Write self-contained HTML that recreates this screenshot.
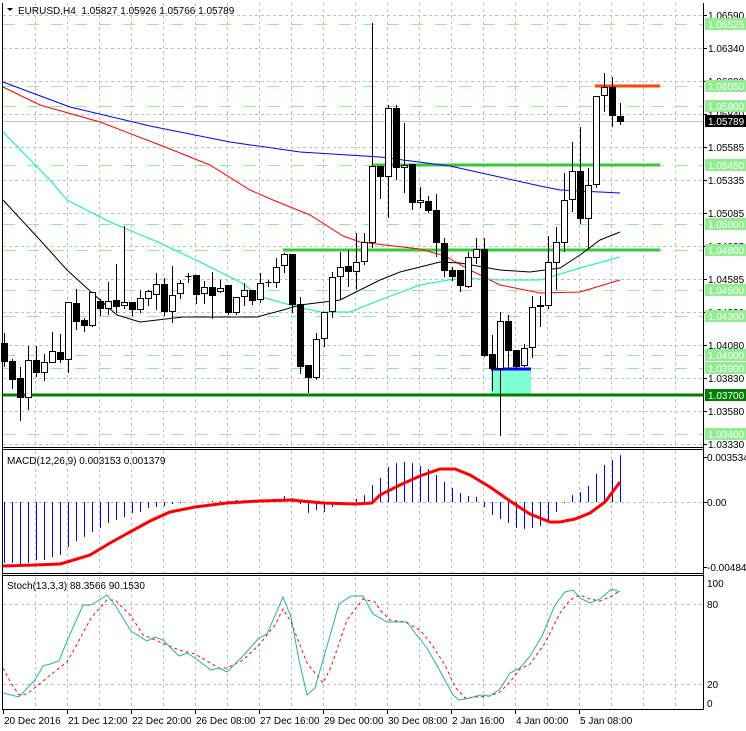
<!DOCTYPE html>
<html><head><meta charset="utf-8"><style>
html,body{margin:0;padding:0;background:#fff;}
svg{display:block;font-family:"Liberation Sans",sans-serif;font-size:10px;}
</style></head><body>
<svg id="s" width="746" height="731" xmlns="http://www.w3.org/2000/svg"></svg>
<script>
var S=document.getElementById('s'),o='';
function L(x1,y1,x2,y2,c,w,d){o+='<line x1="'+x1+'" y1="'+y1+'" x2="'+x2+'" y2="'+y2+'" stroke="'+c+'" stroke-width="'+(w||1)+'"'+(d?' stroke-dasharray="'+d+'"':'')+'/>';}
function R(x,y,w,h,f,st){o+='<rect x="'+x+'" y="'+y+'" width="'+w+'" height="'+h+'" fill="'+f+'"'+(st?' stroke="'+st+'" stroke-width="1"':'')+'/>';}
function T(x,y,t,c,a){o+='<text x="'+x+'" y="'+y+'" fill="'+(c||'#000')+'"'+(a?' text-anchor="'+a+'"':'')+'>'+t+'</text>';}
function P(pts,c,w,d){o+='<polyline fill="none" points="'+pts.map(function(p){return p.join(',')}).join(' ')+'" stroke="'+c+'" stroke-width="'+(w||1)+'"'+(d?' stroke-dasharray="'+d+'"':'')+'/>';}
var G='#c0c0c0',LG='#90ee90';
for(var x=35.5;x<700;x+=32){L(x,3,x,447,G,1,'3,3');L(x,451,x,573,G,1,'3,3');L(x,577,x,708,G,1,'3,3');}
var gl=[[15,'1.06590'],[48,'1.06340'],[81,'1.06090'],[114,'1.05840'],[147,'1.05585'],[180,'1.05335'],[213,'1.05085'],[246,'1.04835'],[279,'1.04585'],[312,'1.04330'],[345,'1.04080'],[378,'1.03830'],[411,'1.03580'],[444,'1.03330']];
gl.forEach(function(g){L(3,g[0]+.5,703,g[0]+.5,G,1,'3,3');});
var lv=[[24,'1.06525'],[86,'1.06050'],[106,'1.05900'],[165,'1.05450'],[224,'1.05000'],[250,'1.04800'],[290,'1.04500'],[316,'1.04300'],[355,'1.04000'],[368,'1.03900'],[434,'1.03400']];
lv.forEach(function(g){L(3,g[0]+.5,703,g[0]+.5,LG,1,'12,12');});
L(3,121.5,703,121.5,'#c0c0c0',1);
L(3,502.5,703,502.5,G,1,'3,3');L(3,604.5,703,604.5,G,1,'3,3');L(3,684.5,703,684.5,G,1,'3,3');
R(491,369,40,26,'#7fffd4');
L(491,369,531,369,'#0000ff',3);
L(283,250,660,250,'#32cd32',3);
L(372,165,660,165,'#32cd32',3);
L(3,395,703,395,'#008000',3);
L(595,86,660,86,'#ff4500',3);
P([[3,82],[70,107],[150,126],[230,142],[300,152],[380,157],[450,166],[540,186],[560,190],[620,193]],'#0000ff',1);
P([[3,87],[40,105],[100,122],[160,145],[210,165],[250,190],[273,200],[310,215],[343,236],[360,242],[420,249],[445,256],[470,270],[500,285],[540,293],[580,292],[620,280]],'#ff0000',1);
P([[3,132],[50,180],[67,200],[110,222],[160,243],[200,262],[240,282],[262,297],[290,305],[320,312],[350,312],[380,300],[420,285],[460,278],[500,280],[540,280],[580,268],[620,257]],'#00fa9a',1);
P([[3,200],[40,240],[67,270],[100,300],[117,315],[140,322],[183,317],[257,317],[283,310],[300,305],[340,300],[380,280],[400,272],[440,262],[460,263],[500,270],[530,272],[560,268],[580,255],[600,240],[620,232]],'#000',1);
var C=[[343,362,333,367,0],[361,380,359,389,0],[378,398,367,421,0],[360,398,346,410,1],[360,373,346,377,0],[362,373,354,381,1],[351,363,332,363,1],[352,360,334,363,0],[302,360,302,373,1],[303,322,289,330,0],[320,326,318,332,0],[292,326,292,327,1],[301,309,299,316,0],[301,309,282,315,1],[300,307,264,313,0],[302,306,226,309,1],[302,310,302,316,0],[298,310,290,313,1],[291,299,290,306,1],[284,295,273,310,1],[284,312,278,316,0],[295,312,266,323,1],[283,294,280,299,1],[276,276,273,283,0],[275,295,275,304,0],[287,294,281,304,1],[287,296,272,319,0],[288,292,280,293,1],[285,313,285,315,0],[297,313,297,315,1],[290,297,283,306,1],[290,301,290,305,0],[283,300,273,303,1],[282,282,280,287,0],[267,283,258,288,1],[254,266,253,273,1],[254,305,254,313,0],[304,367,297,374,0],[365,378,365,393,0],[339,378,333,380,1],[312,339,312,347,1],[277,312,272,318,1],[267,277,252,300,1],[266,272,250,287,0],[262,272,233,290,1],[242,262,233,265,1],[166,243,23,248,1],[166,177,166,199,0],[108,177,105,218,1],[108,168,105,180,0],[165,168,123,193,1],[164,203,164,210,0],[200,203,187,208,1],[201,211,196,213,0],[210,243,194,257,0],[243,271,238,277,0],[270,277,267,281,0],[270,286,270,292,0],[257,287,252,288,1],[249,258,238,264,1],[249,356,238,357,0],[354,369,335,391,0],[321,369,312,436,1],[321,351,315,369,0],[350,367,350,369,0],[348,366,344,367,1],[307,348,296,358,1],[305,307,296,327,1],[262,306,236,309,1],[242,263,227,290,1],[200,243,173,252,1],[171,200,142,212,1],[171,219,127,224,0],[185,219,168,250,1],[96,185,96,188,1],[87,96,73,112,1],[87,116,77,127,0],[116,122,103,125,0]];
C.forEach(function(c,i){var x=4+8*i+.5;L(x,c[2],x,c[3],'#000',1);var h=Math.max(c[1]-c[0],1);
 if(c[0]==c[1]){L(x-3,c[0]+.5,x+3,c[0]+.5,'#000',1);}
 else if(c[4])R(x-3,c[0]+.5,6,h-1,'#fff','#000');else R(x-3.5,c[0],7,h,'#000');});
var H=[563,563,567,563,560,560,557,555,547,541,537,532,528,523,520,517,513,512,508,507,506,504,503,502,502,502,501,501,501,500,500,500,500,500,500,496,498,504,513,510,512,507,502,502,499,495,485,478,467,463,462,463,466,469,475,482,488,493,496,497,507,515,519,523,528,529,528,526,520,512,503,495,492,486,474,465,460,455];
H.forEach(function(v,i){var x=4+8*i+.5;if(Math.abs(v-502)>0.5)L(x,502,x,Math.max(v,452),'#0000ff',1);});
P([[3,566],[35,565],[60,564],[67,562],[90,555],[110,543],[130,532],[150,521],[170,512],[195,507],[227,503],[260,501],[291,500],[323,503],[355,504],[372,503],[380,495],[400,485],[420,476],[440,469],[455,469],[470,475],[490,487],[510,501],[530,514],[550,522],[560,522],[575,519],[590,513],[605,502],[620,482]],'#ff0000',3);
P([[3,668],[11,683],[19,695],[27,694],[43,681],[59,668],[67,662],[75,648],[91,618],[107,600],[115,600],[131,616],[143,635],[155,640],[179,650],[195,654],[219,668],[227,668],[243,660],[259,645],[275,625],[283,609],[291,622],[307,663],[323,683],[331,667],[347,620],[363,599],[375,602],[380,610],[390,620],[405,622],[420,630],[430,642],[445,665],[455,687],[465,698],[490,696],[500,692],[510,682],[520,669],[530,664],[545,643],[560,613],[570,600],[580,595],[590,599],[600,601],[610,597],[620,591]],'#ff0000',1,'3,3');
P([[3,693],[19,697],[35,680],[43,666],[50,664],[59,661],[67,641],[83,605],[91,605],[107,595],[115,605],[131,631],[147,641],[155,637],[163,640],[179,656],[187,653],[195,658],[211,670],[219,668],[227,672],[243,656],[259,638],[267,634],[283,597],[291,617],[299,660],[307,695],[315,688],[323,660],[339,604],[351,596],[363,596],[373,614],[387,622],[400,622],[407,622],[415,633],[427,648],[440,671],[453,695],[459,700],[470,698],[480,695],[490,696],[500,689],[510,673],[520,668],[530,656],[542,636],[555,605],[565,592],[573,590],[580,598],[590,603],[600,599],[608,592],[612,589],[620,592]],'#20b2aa',1);
L(2.5,3,2.5,709,'#000',1);L(703.5,3,703.5,709,'#000',1);
L(2,447.5,704,447.5,'#000',1);L(2,449.5,704,449.5,'#000',1);
L(2,573.5,704,573.5,'#000',1);L(2,575.5,704,575.5,'#000',1);
L(2,709.5,704,709.5,'#000',1);
gl.forEach(function(g){L(703,g[0]+.5,707,g[0]+.5,'#000',1);T(708,g[0]+4,g[1]);});
lv.forEach(function(g){R(705,g[0]-6,41,12,LG);T(708,g[0]+4,g[1],'#fff');});
R(705,389,41,12,'#008000');T(708,399,'1.03700','#fff');
R(705,115,41,12,'#000');T(708,125,'1.05789','#fff');
T(707,461,'0.003534');T(707,506,'0.00');T(707,571,'-0.004849');
L(703,457.5,707,457.5,'#000');L(703,502.5,707,502.5,'#000');L(703,567.5,707,567.5,'#000');
T(707,587,'100');T(707,608,'80');T(707,688,'20');T(707,707,'0');
o+='<polygon points="7,8 13,8 10,11" fill="#000"/>';
T(18,14,'EURUSD,H4&#160;&#160;1.05827 1.05926 1.05766 1.05789');
T(7,464,'MACD(12,26,9) 0.003153 0.001379');
T(7,589,'Stoch(13,3,3) 88.3566 90.1530');
var tl=[[3,'20 Dec 2016'],[67,'21 Dec 12:00'],[131,'22 Dec 20:00'],[195,'26 Dec 08:00'],[259,'27 Dec 16:00'],[323,'29 Dec 00:00'],[387,'30 Dec 08:00'],[451,'2 Jan 16:00'],[515,'4 Jan 00:00'],[579,'5 Jan 08:00']];
tl.forEach(function(t){L(t[0]+.5,709,t[0]+.5,714,'#000');T(t[0]+1,724,t[1]);});
S.innerHTML=o;
</script>
</body></html>
